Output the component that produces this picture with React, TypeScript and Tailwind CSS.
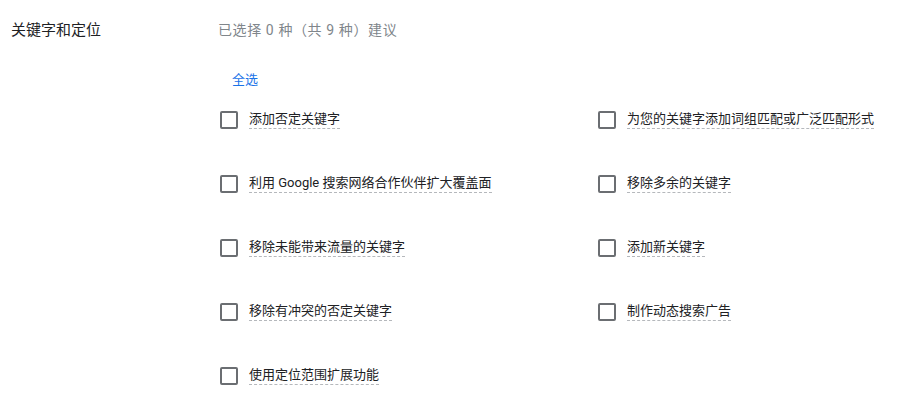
const left = [
  "添加否定关键字",
  "利用 Google 搜索网络合作伙伴扩大覆盖面",
  "移除未能带来流量的关键字",
  "移除有冲突的否定关键字",
  "使用定位范围扩展功能",
];

const right = [
  "为您的关键字添加词组匹配或广泛匹配形式",
  "移除多余的关键字",
  "添加新关键字",
  "制作动态搜索广告",
];

function Option({ label }: { label: string }) {
  return (
    <label className="flex h-5 cursor-pointer items-center gap-[11px]">
      <span className="h-[18px] w-[18px] shrink-0 rounded-[2px] border-2 border-[#6b6e72] bg-white" />
      <span className="border-b border-dashed border-[#b5b8bc] pb-px text-[13px] leading-[16px] text-[#202124]">
        {label}
      </span>
    </label>
  );
}

export default function App() {
  const rows = [0, 1, 2, 3, 4];

  return (
    <div
      className="flex min-h-[413px] w-[907px] bg-white pt-5"
      style={{ fontFamily: '"Roboto", "Noto Sans CJK SC", sans-serif' }}
    >
      <div className="w-[218px] shrink-0 pl-[11px] text-[15px] leading-5 text-[#202124]">
        关键字和定位
      </div>

      <div className="flex flex-col">
        <div className="text-[14px] leading-5 tracking-[0.6px] text-[#80868b]">
          已选择 0 种（共 9 种）建议
        </div>

        <button
          type="button"
          className="mt-[30px] ml-[14px] self-start text-[13px] leading-5 text-[#1a73e8]"
        >
          全选
        </button>

        <div className="mt-5 ml-[2px] grid grid-cols-[378px_1fr] gap-y-[44px]">
          {rows.map((i) => (
            <div key={i} className="contents">
              <Option label={left[i]} />
              {right[i] ? <Option label={right[i]} /> : <div />}
            </div>
          ))}
        </div>
      </div>
    </div>
  );
}
